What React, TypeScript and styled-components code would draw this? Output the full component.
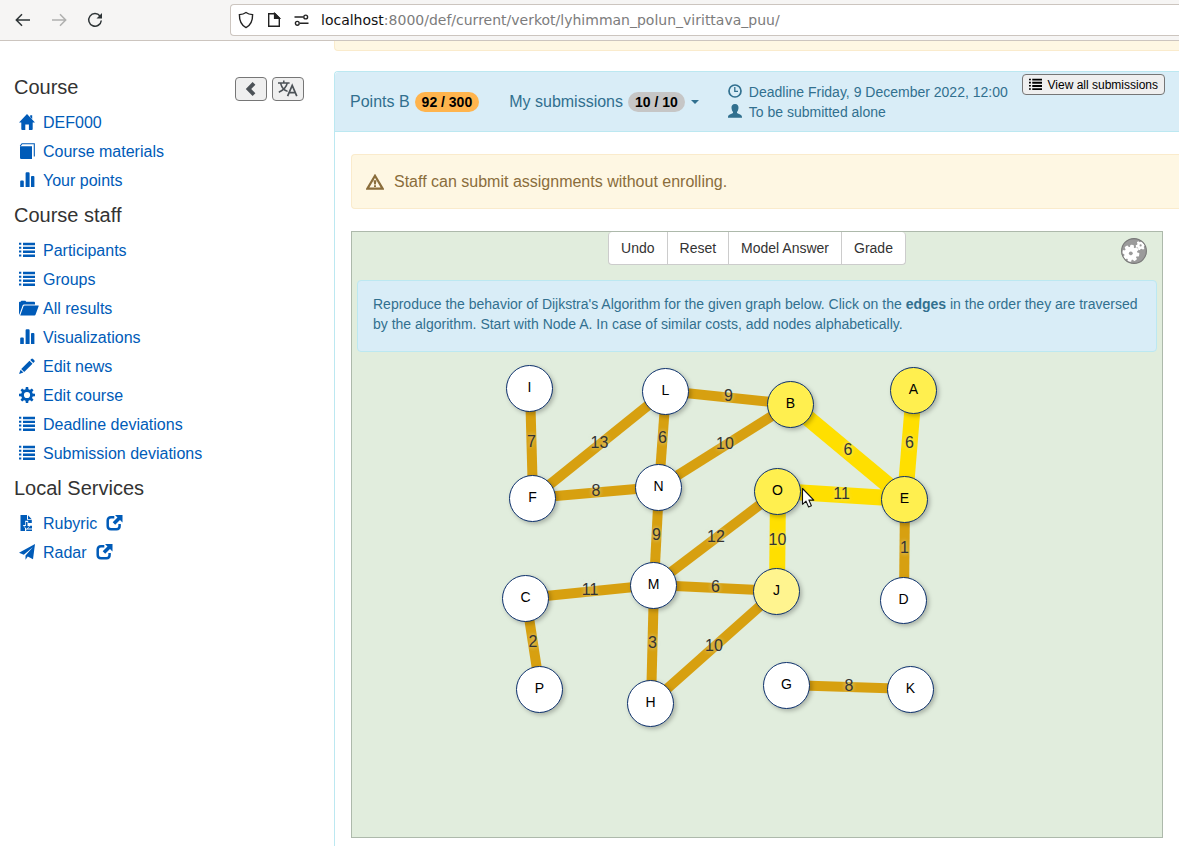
import React from "react";
import styled, { createGlobalStyle } from "styled-components";

const sans = `"Liberation Sans", Arial, Helvetica, sans-serif`;

const GlobalStyle = createGlobalStyle`
  * { box-sizing: border-box; }
  body {
    margin: 0;
    background: #fff;
    color: #333;
    font-family: ${sans};
    font-size: 16px;
    line-height: 20px;
    overflow-x: hidden;
  }
  button { font-family: inherit; margin: 0; }
`;

/* ---------- icons ---------- */

type IconName =
  | "home" | "book" | "stats" | "list" | "folder" | "pencil" | "cog" | "saveFile"
  | "send" | "external" | "time" | "user" | "warning" | "chevron" | "translate";

const cogTeeth = [0, 45, 90, 135, 180, 225, 270, 315];

const shapes: Record<IconName, { w: number; h: number; art: React.ReactNode }> = {
  home: {
    w: 16, h: 16,
    art: <path d="M8 0 L16 8.6 H13.7 V15 Q13.7 16 12.9 16 H9.9 V10.4 H6.3 V16 H3.2 Q2.3 16 2.3 15 V8.6 H0 L8 0Z M11.2 1.2 H13.2 V5 L11.2 3Z" />,
  },
  book: {
    w: 16, h: 16,
    art: (
      <>
        <path d="M1 3.2 H13 V16 H2.2 Q1 16 1 14.8Z" />
        <path d="M1.2 3 L3 .7 H15.3 V13.6" fill="none" stroke="currentColor" strokeWidth="1.1" />
      </>
    ),
  },
  stats: {
    w: 16, h: 16,
    art: <path d="M1.2 9.4 q0-.9.9-.9h1.8q.9 0 .9.9V15H1.2z M6.6 1.2q0-1 1-1h2q1 0 1 1V15h-4z M12 5q0-.9.9-.9h1.6q.9 0 .9.9v10H12z" />,
  },
  list: {
    w: 16, h: 16,
    art: <path d="M0 .8h2.3v2H0zM4 .8h12v2.4H4zM0 4.7h2.3v2H0zM4 4.7h12v2.4H4zM0 8.6h2.3v2H0zM4 8.6h12V11H4zM0 12.5h2.3v2H0zM4 12.5h12v2.4H4z" />,
  },
  folder: {
    w: 20, h: 16,
    art: <path d="M0 14.5V2.6Q0 1.8.8 1.8H1.6L2.4.8H6.4L7.2 1.8H15Q16 1.8 16 2.8V4.5H5Q4 4.5 3.6 5.4L.4 14.5Z M4.6 6.1Q4.9 5.4 5.7 5.4H19.3Q20 5.4 19.7 6.1L16.6 14.5Q16.3 15.4 15.4 15.4H1.2Z" />,
  },
  pencil: {
    w: 16, h: 16,
    art: <path d="M12.2 1.1Q13.1.2 14 1L15.3 2.3Q16.1 3.2 15.2 4.1L14.3 5 11.3 2Z M10.5 2.8 13.5 5.8 5.2 14 2.2 11Z M1.6 11.8 4.4 14.5 0 16Z" />,
  },
  cog: {
    w: 16, h: 16,
    art: (
      <>
        <circle cx="8" cy="8" r="4.5" fill="none" stroke="currentColor" strokeWidth="2.8" />
        {cogTeeth.map((a) => (
          <path key={a} d="M6.4 3 L6.8 0 H9.2 L9.6 3Z" transform={`rotate(${a} 8 8)`} />
        ))}
      </>
    ),
  },
  saveFile: {
    w: 16, h: 16,
    art: <path d="M1.5 0H8V4.8H12.8V8H9.2V5.8H6.2V10H3.8L6 13V16H1.5Z M9 .3 12.5 3.9H9Z M6.9 7H8.5V11H10.4L7.7 14 5 11H6.9Z M8.9 13.4 11.2 10.8H13V13.4Z M7.2 14.4H13V16H7.2Z" />,
  },
  send: {
    w: 16, h: 16,
    art: <path d="M16 0 L14 15.3 8.8 12.6 6.5 15.8 V11.5 L13.8 3.2 4.8 10.7 0 8.7Z" />,
  },
  external: {
    w: 17, h: 16,
    art: (
      <>
        <path d="M8.3 2.2H5Q1.7 2.2 1.7 5.5V11Q1.7 14.2 5 14.2H10.5Q13.6 14.2 13.6 11V9" fill="none" stroke="currentColor" strokeWidth="2.5" />
        <path d="M9 0H16.5V7.5L14 5 9.2 9.8 6.7 7.3 11.5 2.5Z" />
      </>
    ),
  },
  time: {
    w: 14, h: 14,
    art: (
      <>
        <circle cx="7" cy="7" r="6" fill="none" stroke="currentColor" strokeWidth="1.7" />
        <path d="M6.8 3V7.4H10" fill="none" stroke="currentColor" strokeWidth="1.3" />
      </>
    ),
  },
  user: {
    w: 14, h: 14,
    art: <path d="M7 0C9.6 0 10.7 1.7 10.5 4 10.3 6 9.7 7.2 9 7.9V9.1C9.7 10 13.9 10.4 14 13V13.8H0V13C.1 10.4 4.3 10 5 9.1V7.9C4.3 7.2 3.7 6 3.5 4 3.3 1.7 4.4 0 7 0Z" />,
  },
  warning: {
    w: 18, h: 16,
    art: (
      <>
        <path d="M9 1.8 L16.6 14.6 H1.4Z" fill="none" stroke="currentColor" strokeWidth="2.2" strokeLinejoin="miter" />
        <path d="M7.5 6.2H10.5L9.8 10.6H8.2Z M8 11.2H10V13H8Z" />
      </>
    ),
  },
  chevron: {
    w: 16, h: 16,
    art: <path d="M9.6 1 L12.4 3.8 8.2 8 12.4 12.2 9.6 15 2.8 8Z" />,
  },
  translate: {
    w: 20, h: 17,
    art: (
      <>
        <path d="M0 3H11.6 M5.8 .4V3 M9.3 3C8.3 7.4 4.6 10.6.8 12.2 M2.6 3.2C3.6 7.2 6.6 10.4 9.6 11.4" fill="none" stroke="currentColor" strokeWidth="1.5" />
        <path d="M9.6 16.2 L14.2 5.4 L18.8 16.2 M11.4 12.6H17" fill="none" stroke="currentColor" strokeWidth="1.7" />
      </>
    ),
  },
};

const IconSvg = styled.svg`
  display: block;
  flex: none;
  fill: currentColor;
`;

function Icon({ name, size = 16 }: { name: IconName; size?: number }) {
  const { w, h, art } = shapes[name];
  return (
    <IconSvg width={Math.round((w * size) / h)} height={size} viewBox={`0 0 ${w} ${h}`} aria-hidden="true">
      {art}
    </IconSvg>
  );
}

/* ---------- browser bar ---------- */

const BrowserBar = styled.header`
  display: flex;
  align-items: center;
  height: 41px;
  padding-left: 14px;
  background: #f6f5f4;
  border-bottom: 1px solid #ccc5bf;
`;

const NavButtons = styled.div`
  display: flex;
  gap: 18px;
  width: 216px;
`;

const NavButton = styled.button<{ $dim?: boolean }>`
  width: 18px;
  height: 18px;
  padding: 0;
  border: 0;
  background: none;
  color: ${(p) => (p.$dim ? "#b0b0af" : "#2e3436")};

  svg { display: block; fill: none; stroke: currentColor; stroke-width: 1.5; }
`;

const AddressBox = styled.div`
  flex: 1;
  display: flex;
  align-items: center;
  gap: 12px;
  height: 32px;
  padding-left: 7px;
  background: #fff;
  border: 1px solid #ccc5bf;
  border-right: 0;
  border-radius: 4px 0 0 4px;
  color: #222;

  > svg { flex: none; fill: none; stroke: currentColor; stroke-width: 1.4; }
`;

const Address = styled.div`
  font: 14px/20px "DejaVu Sans", sans-serif;
  color: #7c7c7c;
  white-space: nowrap;

  b { font-weight: normal; color: #111; }
`;

/* ---------- sidebar ---------- */

const Page = styled.div`
  display: flex;
  flex-direction: column;
  min-height: 100vh;
`;

const Columns = styled.div`
  flex: 1;
  display: grid;
  grid-template-columns: 334px minmax(0, 1fr);
`;

const Sidebar = styled.nav`
  padding: 26px 30px 0 14px;
`;

const SidebarTop = styled.div`
  display: flex;
  align-items: center;
  justify-content: space-between;
`;

const SideHeading = styled.h4`
  margin: 0;
  font-size: 20px;
  font-weight: normal;
  line-height: 41px;
`;

const SideButtons = styled.div`
  display: flex;
  gap: 5px;
  padding-top: 2px;
`;

const SideButton = styled.button`
  display: flex;
  align-items: center;
  justify-content: center;
  width: 32px;
  height: 24px;
  padding: 0;
  color: #4c5257;
  background: #efefef;
  border: 1px solid #767676;
  border-radius: 4px;
`;

const SideList = styled.ul`
  margin: 0;
  padding: 0 0 0 5px;
  list-style: none;
`;

const SideLink = styled.a`
  display: flex;
  align-items: center;
  height: 29px;
  color: #005bb8;
  text-decoration: none;

  > span { margin-right: 9px; }
  svg { margin-bottom: 2px; }
`;

const IconSlot = styled.i`
  flex: none;
  width: 24px;
`;

const staffLinks: [IconName, string][] = [
  ["list", "Participants"],
  ["list", "Groups"],
  ["folder", "All results"],
  ["stats", "Visualizations"],
  ["pencil", "Edit news"],
  ["cog", "Edit course"],
  ["list", "Deadline deviations"],
  ["list", "Submission deviations"],
];

function Links({ items, external }: { items: [IconName, string][]; external?: boolean }) {
  return (
    <SideList>
      {items.map(([icon, label]) => (
        <li key={label}>
          <SideLink href="#">
            <IconSlot><Icon name={icon} /></IconSlot>
            <span>{label}</span>
            {external && <Icon name="external" />}
          </SideLink>
        </li>
      ))}
    </SideList>
  );
}

/* ---------- main column ---------- */

const Main = styled.main`
  display: flex;
  flex-direction: column;
`;

const CutOffAlert = styled.div`
  height: 10px;
  margin-bottom: 20px;
  background: #fef7e3;
  border: solid #faebcc;
  border-width: 0 0 1px 1px;
  border-radius: 0 0 0 4px;
`;

const Panel = styled.section`
  flex: 1;
  border: solid #bce8f1;
  border-width: 1px 0 0 1px;
  border-radius: 4px 0 0 0;
`;

const PanelHead = styled.div`
  display: flex;
  align-items: center;
  height: 60px;
  padding: 0 14px 0 15px;
  background: #d9edf7;
  border-bottom: 1px solid #bce8f1;
  border-radius: 4px 0 0 0;
  color: #31708f;
  white-space: nowrap;
`;

const HeadItem = styled.div`
  display: flex;
  align-items: center;
  gap: 5px;
  margin-right: 30px;
`;

const MenuButton = styled.button`
  display: flex;
  align-items: center;
  gap: 5px;
  margin-right: 29px;
  padding: 0;
  border: 0;
  background: none;
  color: inherit;
  font-size: 16px;
  line-height: 20px;

  &::after {
    content: "";
    margin-left: 1px;
    border: 4px solid transparent;
    border-top-color: currentColor;
    border-bottom: 0;
  }
`;

const Badge = styled.span<{ $color: string }>`
  padding: 0 7px;
  border-radius: 10px;
  background: ${(p) => p.$color};
  color: #000;
  font-size: 14px;
  font-weight: bold;
  line-height: 20px;
`;

const Facts = styled.div`
  font-size: 14px;
  line-height: 20px;
`;

const Fact = styled.div`
  display: flex;
  align-items: center;
  gap: 7px;

  svg { margin-bottom: 2px; }
`;

const ViewAll = styled.button`
  display: flex;
  align-items: center;
  gap: 6px;
  align-self: flex-start;
  height: 21px;
  margin: 2px 0 0 auto;
  padding: 0 6px;
  background: #efefef;
  border: 1px solid #767676;
  border-radius: 4px;
  color: #000;
  font-size: 12px;
`;

const PanelBody = styled.div`
  padding: 22px 0 8px 16px;
`;

const Warning = styled.div`
  display: flex;
  align-items: center;
  gap: 10px;
  height: 55px;
  margin-bottom: 22px;
  padding-left: 14px;
  background: #fef7e3;
  border: 1px solid #faebcc;
  border-right: 0;
  border-radius: 4px 0 0 4px;
  color: #8a6d3b;
`;

const Exercise = styled.div`
  margin-right: 16px;
  padding: 0 5px;
  background: #e1eddd;
  border: 1px solid #adb9ab;
`;

const Controls = styled.div`
  display: grid;
  grid-template-columns: 1fr auto 1fr;
  align-items: start;
  height: 48px;
`;

const ButtonGroup = styled.div`
  grid-column: 2;
  display: flex;
  background: #fff;
  border: 1px solid #ccc;
  border-top: 0;
  border-radius: 4px;
`;

const ControlButton = styled.button`
  height: 32px;
  padding: 0 12px;
  border: 0;
  background: none;
  color: #333;
  font-size: 14px;

  & + & { border-left: 1px solid #ccc; }
`;

const SettingsButton = styled.button`
  justify-self: end;
  width: 26px;
  height: 26px;
  margin: 6px 10px 0 0;
  padding: 0;
  border: 0;
  border-radius: 50%;
  background: none;

  svg { display: block; }
`;

const Instructions = styled.p`
  margin: 0;
  padding: 13px 15px 17px;
  background: #d9edf7;
  border: 1px solid #bce8f1;
  border-radius: 4px;
  color: #31708f;
  font-size: 14px;
  line-height: 20px;
`;

const GraphSvg = styled.svg`
  display: block;
  margin: 0 auto;
  font-family: ${sans};
`;

const NodeCircle = styled.circle`
  stroke: #0b2f6b;
  stroke-width: 1px;
  filter: drop-shadow(2px 2px 2px rgba(0, 0, 0, 0.25));
`;

const NodeText = styled.text`
  fill: #000;
  font-size: 14px;
  text-anchor: middle;
`;

const EdgeText = styled.text`
  fill: #333;
  font-size: 16px;
  text-anchor: middle;
  text-shadow: 0 0 4px rgba(224, 237, 221, 0.8);
`;

/* ---------- graph data ---------- */

const nodes: Record<string, [number, number, string?]> = {
  I: [72, 36], F: [75, 146], L: [208, 39], N: [201, 135],
  B: [333, 52, "#ffef4f"], A: [456, 38, "#ffef4f"], E: [447, 147, "#ffef4f"],
  O: [320, 139, "#ffef4f"], J: [319, 239, "#fff48f"],
  D: [446, 248], C: [68, 246], M: [196, 233], P: [82, 337], H: [193, 351],
  G: [329, 333], K: [453, 337],
};

const edges: [string, string, number, boolean?][] = [
  ["I", "F", 7], ["F", "L", 13], ["F", "N", 8], ["L", "B", 9], ["L", "N", 6],
  ["N", "B", 10], ["N", "M", 9], ["M", "O", 12], ["M", "J", 6], ["C", "M", 11],
  ["C", "P", 2], ["M", "H", 3], ["H", "J", 10], ["E", "D", 1], ["G", "K", 8],
  ["O", "J", 10, true], ["O", "E", 11, true], ["B", "E", 6, true], ["A", "E", 6, true],
];

function Graph() {
  return (
    <GraphSvg width="600" height="485" viewBox="0 0 600 485" role="img" aria-label="Weighted graph">
      <g transform="translate(1 0)">
        {edges.map(([a, b, , picked]) => (
          <line
            key={a + b}
            x1={nodes[a][0]} y1={nodes[a][1]} x2={nodes[b][0]} y2={nodes[b][1]}
            stroke={picked ? "#ffdf00" : "#d7a010"}
            strokeWidth={picked ? 16 : 10}
          />
        ))}
      </g>
      <g transform="translate(.5 .5)">
        {Object.entries(nodes).map(([name, [x, y, fill]]) => (
          <g key={name}>
            <NodeCircle cx={x} cy={y} r={23} fill={fill ?? "#fff"} />
            <NodeText x={x} y={y + 3}>{name}</NodeText>
          </g>
        ))}
      </g>
      <g transform="translate(1 0)">
        {edges.map(([a, b, weight]) => (
          <EdgeText
            key={a + b}
            x={(nodes[a][0] + nodes[b][0]) / 2}
            y={Math.floor((nodes[a][1] + nodes[b][1]) / 2) + 4}
          >
            {weight}
          </EdgeText>
        ))}
      </g>
      <path
        d="M345.5 136.5V152.3L349 149.100 351.600 155 354.400 153.800 351.900 148.100H356.800Z"
        fill="#fff" stroke="#111" strokeWidth="1.1" strokeLinejoin="round"
      />
    </GraphSvg>
  );
}

function Gears() {
  return (
    <svg width="26" height="26" viewBox="0 0 26 26" aria-hidden="true">
      <defs>
        <clipPath id="disc"><circle cx="13" cy="13" r="12.3" /></clipPath>
      </defs>
      <circle cx="13" cy="13" r="12.4" fill="#9b9b9b" />
      <g clipPath="url(#disc)">
        <g fill="#fff">
          <circle cx="9.8" cy="15.3" r="6.6" />
          {[10, 55, 100, 145, 190, 235, 280, 325].map((a) => (
            <rect key={a} x="7.9" y="6.8" width="3.8" height="4" rx="1" transform={`rotate(${a} 9.8 15.3)`} />
          ))}
          <circle cx="19.6" cy="7.4" r="3.5" />
          {[20, 80, 140, 200, 260, 320].map((a) => (
            <rect key={a} x="18.5" y="2.6" width="2.2" height="2.5" rx=".6" transform={`rotate(${a} 19.6 7.4)`} />
          ))}
        </g>
        <circle cx="9.8" cy="15.3" r="1.9" fill="#9b9b9b" />
        <circle cx="19.6" cy="7.4" r="1.1" fill="#9b9b9b" />
      </g>
      <circle cx="13" cy="13" r="12.4" fill="none" stroke="#777" strokeWidth="1.1" />
    </svg>
  );
}

export default function App() {
  return (
    <Page>
      <GlobalStyle />
      <BrowserBar>
        <NavButtons>
          <NavButton aria-label="Back">
            <svg width="18" height="18" viewBox="0 0 18 18"><path d="M16 9H2.5M8 3.2 2.3 9 8 14.8" /></svg>
          </NavButton>
          <NavButton aria-label="Forward" $dim>
            <svg width="18" height="18" viewBox="0 0 18 18"><path d="M2 9H15.5M10 3.2 15.7 9 10 14.8" /></svg>
          </NavButton>
          <NavButton aria-label="Reload">
            <svg width="18" height="18" viewBox="0 0 18 18">
              <path d="M14 5A6.300 6.300 0 1 0 15.300 9.500" />
              <path d="M16 2V7.500H10.500Z" fill="currentColor" stroke="none" />
            </svg>
          </NavButton>
        </NavButtons>
        <AddressBox>
          <svg width="16" height="18" viewBox="0 0 16 18">
            <path d="M8 1.5C6 3 3.500 3.500 1.400 3.600C1.300 9.500 2.500 14 8 16.600C13.500 14 14.700 9.500 14.600 3.600C12.500 3.500 10 3 8 1.500Z" />
          </svg>
          <svg width="16" height="16" viewBox="0 0 16 16">
            <path d="M2.700 1.700H9L13.300 6V14.300H2.700Z" />
            <path d="M8.600 1.500V6.400H13.500Z" fill="currentColor" />
          </svg>
          <svg width="15" height="16" viewBox="0 0 15 16">
            <path d="M.5 5H9.300M6 11.300H14.500" />
            <circle cx="11.700" cy="5" r="1.900" /><circle cx="3.300" cy="11.300" r="1.900" />
          </svg>
          <Address><b>localhost</b>:8000/def/current/verkot/lyhimman_polun_virittava_puu/</Address>
        </AddressBox>
      </BrowserBar>

      <Columns>
        <Sidebar>
          <SidebarTop>
            <SideHeading>Course</SideHeading>
            <SideButtons>
              <SideButton aria-label="Collapse menu"><Icon name="chevron" size={16} /></SideButton>
              <SideButton aria-label="Change language"><Icon name="translate" size={17} /></SideButton>
            </SideButtons>
          </SidebarTop>
          <Links items={[["home", "DEF000"], ["book", "Course materials"], ["stats", "Your points"]]} />
          <SideHeading>Course staff</SideHeading>
          <Links items={staffLinks} />
          <SideHeading>Local Services</SideHeading>
          <Links items={[["saveFile", "Rubyric"], ["send", "Radar"]]} external />
        </Sidebar>

        <Main>
          <CutOffAlert />
          <Panel>
            <PanelHead>
              <HeadItem>Points B <Badge $color="#ffb44d">92 / 300</Badge></HeadItem>
              <MenuButton>My submissions <Badge $color="#c6c6c6">10 / 10</Badge></MenuButton>
              <Facts>
                <Fact><Icon name="time" size={14} />Deadline Friday, 9 December 2022, 12:00</Fact>
                <Fact><Icon name="user" size={14} />To be submitted alone</Fact>
              </Facts>
              <ViewAll><Icon name="list" size={13} />View all submissions</ViewAll>
            </PanelHead>
            <PanelBody>
              <Warning><Icon name="warning" />Staff can submit assignments without enrolling.</Warning>
              <Exercise>
                <Controls>
                  <ButtonGroup>
                    <ControlButton>Undo</ControlButton>
                    <ControlButton>Reset</ControlButton>
                    <ControlButton>Model Answer</ControlButton>
                    <ControlButton>Grade</ControlButton>
                  </ButtonGroup>
                  <SettingsButton aria-label="Settings"><Gears /></SettingsButton>
                </Controls>
                <Instructions>
                  Reproduce the behavior of Dijkstra's Algorithm for the given graph below. Click on the{" "}
                  <b>edges</b> in the order they are traversed by the algorithm. Start with Node A. In case of
                  similar costs, add nodes alphabetically.
                </Instructions>
                <Graph />
              </Exercise>
            </PanelBody>
          </Panel>
        </Main>
      </Columns>
    </Page>
  );
}
